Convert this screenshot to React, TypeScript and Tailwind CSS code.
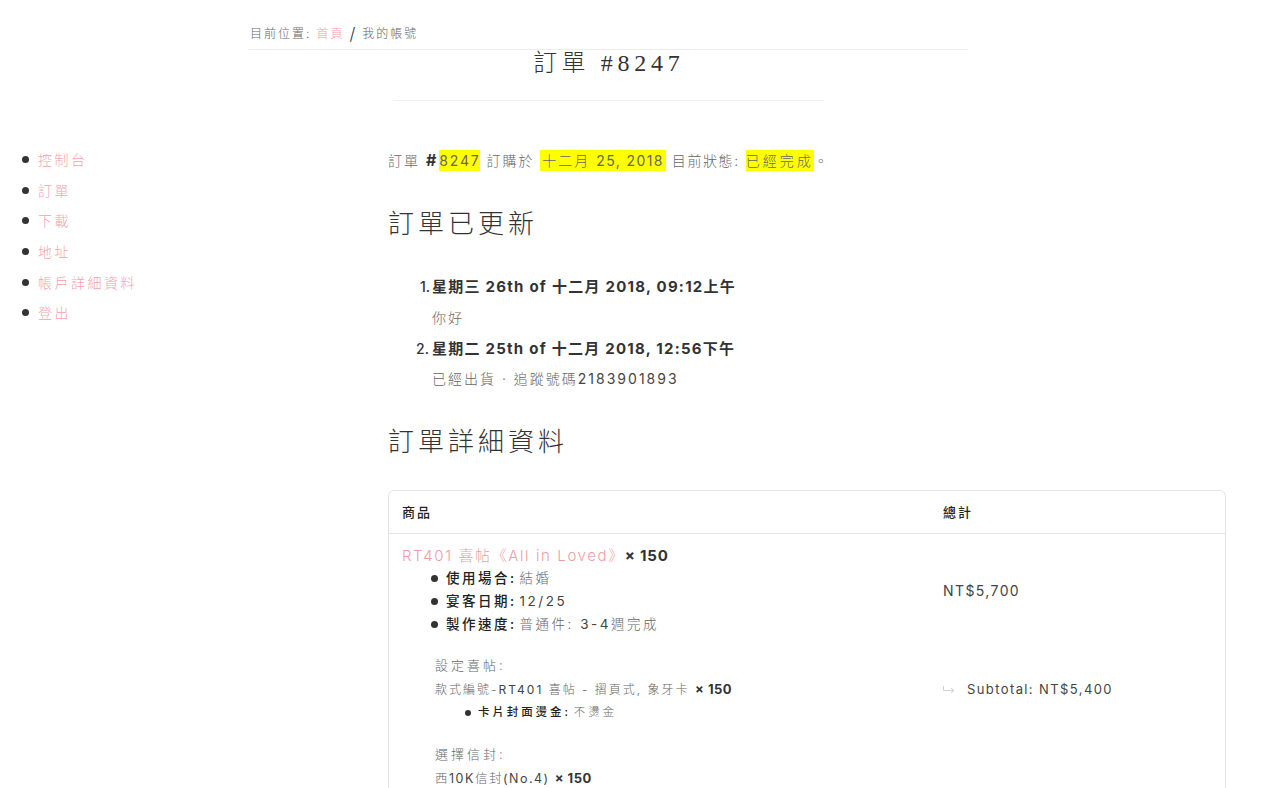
function Dot({ size = 'w-[7px] h-[7px]' }: { size?: string }) {
  return <span className={`${size} rounded-full bg-[#333] shrink-0`} />;
}

function Mark({ children, px = '' }: { children: React.ReactNode; px?: string }) {
  return <span className={`bg-[#ffff00] text-[#666] py-[2px] ${px}`}>{children}</span>;
}

function Num({ children }: { children: React.ReactNode }) {
  return <span className="text-[#444] font-normal">{children}</span>;
}

const nav = ['控制台', '訂單', '下載', '地址', '帳戶詳細資料', '登出'];

function Attr({ label, children }: { label: string; children: React.ReactNode }) {
  return (
    <li className="flex items-center h-[23px] whitespace-nowrap">
      <Dot />
      <span className="ml-[8px] font-medium text-[#222]">{label}</span>
      <span className="ml-[3px] text-[#666]">{children}</span>
    </li>
  );
}

export default function App() {
  return (
    <div className="font-['Inter','Noto_Sans_CJK_TC',sans-serif] h-screen overflow-hidden bg-white text-[14px] text-[#666] tracking-[2px] font-light">
      <div className="w-[720px] ml-[248px]">
        <div className="h-[50px] pt-[18px] pl-[2px] border-b border-[#eeeeee] text-[12px] leading-[18px] tracking-[2px] flex items-center text-[#666]">
          <span>目前位置:</span>
          <span className="ml-[5px] text-[#f19ca4]">首頁</span>
          <span className="mx-[5px] text-[#333] text-[17px] font-light">/</span>
          <span>我的帳號</span>
        </div>
      </div>
      <div className="w-[430px] ml-[394px] h-[51px] border-b border-[#eeeeee] text-center text-[24px] leading-[26px] tracking-[4.2px] font-light text-[#333]">
        訂單 <span className="font-['Liberation_Serif',serif] font-normal tracking-[4.8px]">#8247</span>
      </div>
      <div className="flex pt-[44px]">
        <ul className="w-[388px] shrink-0 pl-[22px] mt-[-1px]">
          {nav.map((n) => (
            <li key={n} className="flex items-center h-[30.7px]">
              <Dot />
              <span className="ml-[9px] text-[#f5a3ab] tracking-[2.5px]">{n}</span>
            </li>
          ))}
        </ul>
        <div className="w-[838px]">
          <p className="h-[32px] leading-[32px] whitespace-nowrap">
            訂單 <b className="font-bold text-[#333] text-[16px] leading-[1] tracking-[3px]">#</b>
            <Mark><span className="font-normal tracking-[1.8px]">8247</span></Mark> 訂購於 <Mark px="px-[2px]">十二月 <span className="font-normal tracking-[1.4px]">25, 2018</span></Mark> <span className="tracking-[1.6px]">目前狀態:</span> <Mark px="tracking-[3px]">已經完成</Mark>。
          </p>
          <h2 className="mt-[29px] h-[36px] text-[26px] leading-[36px] font-extralight tracking-[4px] text-[#333]">訂單已更新</h2>
          <ol className="mt-[29px] pl-[44px] text-[#333]">
            <li className="h-[31px] relative">
              <span className="absolute left-[-12px] top-0 leading-[31px] font-medium tracking-normal">1.</span>
              <span className="block leading-[31px] font-bold text-[15px] tracking-[1.25px] whitespace-nowrap">星期三 26th of 十二月 2018, 09:12上午</span>
            </li>
            <li className="h-[31px] leading-[31px] text-[#666]">你好</li>
            <li className="h-[31px] relative">
              <span className="absolute left-[-16px] top-0 leading-[31px] font-medium tracking-normal">2.</span>
              <span className="block leading-[31px] font-bold text-[15px] tracking-[1.25px] whitespace-nowrap">星期二 25th of 十二月 2018, 12:56下午</span>
            </li>
            <li className="h-[30px] leading-[30px] text-[#666]">已經出貨 · 追蹤號碼<Num>2183901893</Num></li>
          </ol>
          <h2 className="mt-[30px] h-[36px] text-[26px] leading-[36px] font-extralight tracking-[4px] text-[#333]">訂單詳細資料</h2>
          <div className="mt-[30px] h-[500px] border border-[#e5e5e5] rounded-[6px]">
            <div className="flex h-[43px] pt-[2px] items-center border-b border-[#e5e5e5] text-[13px] font-medium text-[#222]">
              <div className="w-[553px] pl-[13px]">商品</div>
              <div className="pl-[1px]">總計</div>
            </div>
            <div className="flex">
              <div className="w-[553px] pl-[13px] pt-[10px]">
                <div className="h-[23px] leading-[24px] whitespace-nowrap">
                  <span className="text-[#f19ca4] text-[15px] tracking-[1.6px]">RT401 喜帖《All in Loved》</span>
                  <b className="font-bold text-[#333] tracking-[0.8px] text-[15px]">× 150</b>
                </div>
                <ul className="pl-[29px] text-[13.5px] tracking-[2.5px]">
                  <Attr label="使用場合:">結婚</Attr>
                  <Attr label="宴客日期:"><Num>12/25</Num></Attr>
                  <Attr label="製作速度:">普通件: <Num>3-4</Num>週完成</Attr>
                </ul>
                <div className="pl-[33px] mt-[17px] text-[13px]">
                  <div className="h-[25px] leading-[24px] tracking-[3px]">設定喜帖:</div>
                  <div className="h-[23px] leading-[22px] text-[12px] tracking-[2px] whitespace-nowrap">
                    款式編號-<Num>RT401</Num> 喜帖 - 摺頁式, 象牙卡 <b className="font-bold text-[#333] tracking-[0.5px] text-[13px]">× 150</b>
                  </div>
                  <div className="h-[24px] flex items-center pl-[30px] text-[11.5px] tracking-[2.9px]">
                    <Dot size="w-[6px] h-[6px]" />
                    <span className="ml-[7px] font-medium text-[#222]">卡片封面燙金:</span>
                    <span className="ml-[3px]">不燙金</span>
                  </div>
                  <div className="mt-[17px] h-[25px] leading-[24px] tracking-[3px]">選擇信封:</div>
                  <div className="h-[22px] leading-[22px] text-[12.5px] tracking-[1.5px] whitespace-nowrap">
                    西<Num>10K</Num>信封<Num>(No.4)</Num> <b className="font-bold text-[#333] tracking-[0.5px] text-[13px]">× 150</b>
                  </div>
                </div>
              </div>
              <div className="pl-[1px]">
                <div className="mt-[47px] h-[20px] leading-[20px] text-[#444] font-normal tracking-[1.4px]">NT$5,700</div>
                <div className="mt-[79px] h-[20px] flex items-center text-[13px] text-[#444] font-normal tracking-[1.4px]">
                  <svg width="12" height="8" viewBox="0 0 12 8" fill="none" stroke="#d0d0d0" strokeWidth="1"><path d="M0.5 0v4.5h10M8 2l2.8 2.5L8 7" /></svg>
                  <span className="ml-[12px]">Subtotal: NT$5,400</span>
                </div>
              </div>
            </div>
          </div>
        </div>
      </div>
    </div>
  );
}
